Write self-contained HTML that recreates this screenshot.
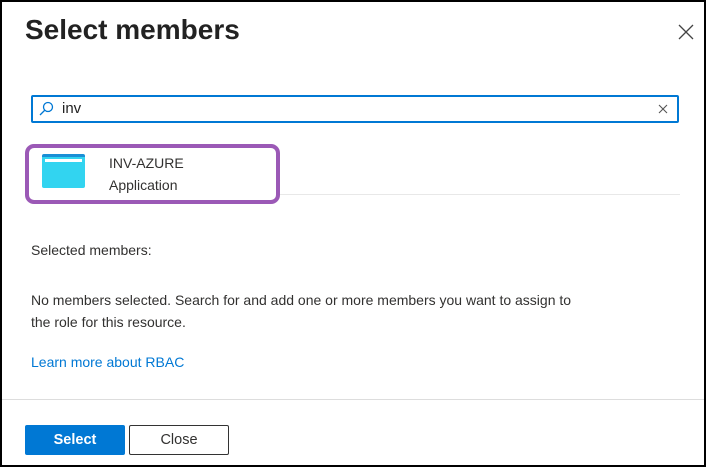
<!DOCTYPE html><html><head><style>
*{margin:0;padding:0;box-sizing:border-box}
body{width:706px;height:467px;background:#fff;font-family:"Liberation Sans",sans-serif;color:#323130;position:relative;overflow:hidden}
.frame{position:absolute;left:0;top:0;width:706px;height:467px;border:2px solid #000}
.a{position:absolute}
</style></head><body>
<div class="frame"></div>
<div class="a" style="left:25px;top:14px;font-size:28px;font-weight:bold;color:#222">Select members</div>
<svg class="a" style="left:678px;top:24px" width="16" height="16"><path d="M1 1L15 15M15 1L1 15" stroke="#444" stroke-width="1.3"/></svg>
<div class="a" style="left:31px;top:95px;width:648px;height:28px;border:2px solid #0078d4;border-radius:2px"></div>
<svg class="a" style="left:38px;top:101px" width="16" height="16"><circle cx="10" cy="6" r="4.5" fill="none" stroke="#0078d4" stroke-width="1.3"/><path d="M7 9L2 14" stroke="#0078d4" stroke-width="1.3"/></svg>
<div class="a" style="left:62px;top:100px;font-size:15px;color:#222">inv</div>
<svg class="a" style="left:658px;top:104px" width="10" height="10"><path d="M1 1L9 9M9 1L1 9" stroke="#555" stroke-width="1.1"/></svg>
<div class="a" style="left:30px;top:194px;width:650px;height:1px;background:#e8e8e8"></div>
<div class="a" style="left:25px;top:144px;width:255px;height:60px;border:4px solid #9b59b6;border-radius:9px;background:#fff"></div>
<div class="a" style="left:42px;top:154px;width:43px;height:34px;background:#32d4f0;border-radius:2px;border-top:3px solid #1a8fd6"></div>
<div class="a" style="left:45px;top:159px;width:37px;height:3px;background:#fff"></div>
<div class="a" style="left:109px;top:155px;font-size:14px">INV-AZURE</div>
<div class="a" style="left:109px;top:177px;font-size:14px">Application</div>
<div class="a" style="left:31px;top:242px;font-size:14px">Selected members:</div>
<div class="a" style="left:31px;top:289px;font-size:14px;line-height:22px;width:660px">No members selected. Search for and add one or more members you want to assign to<br>the role for this resource.</div>
<div class="a" style="left:31px;top:354px;font-size:14px;color:#0078d4">Learn more about RBAC</div>
<div class="a" style="left:2px;top:399px;width:702px;height:1px;background:#ddd"></div>
<div class="a" style="left:25px;top:425px;width:100px;height:30px;background:#0078d4;border-radius:2px;color:#fff;font-weight:bold;font-size:14.5px;text-align:center;line-height:30px">Select</div>
<div class="a" style="left:129px;top:425px;width:100px;height:30px;border:1px solid #333;border-radius:2px;font-size:14.5px;text-align:center;line-height:28px">Close</div>
</body></html>
